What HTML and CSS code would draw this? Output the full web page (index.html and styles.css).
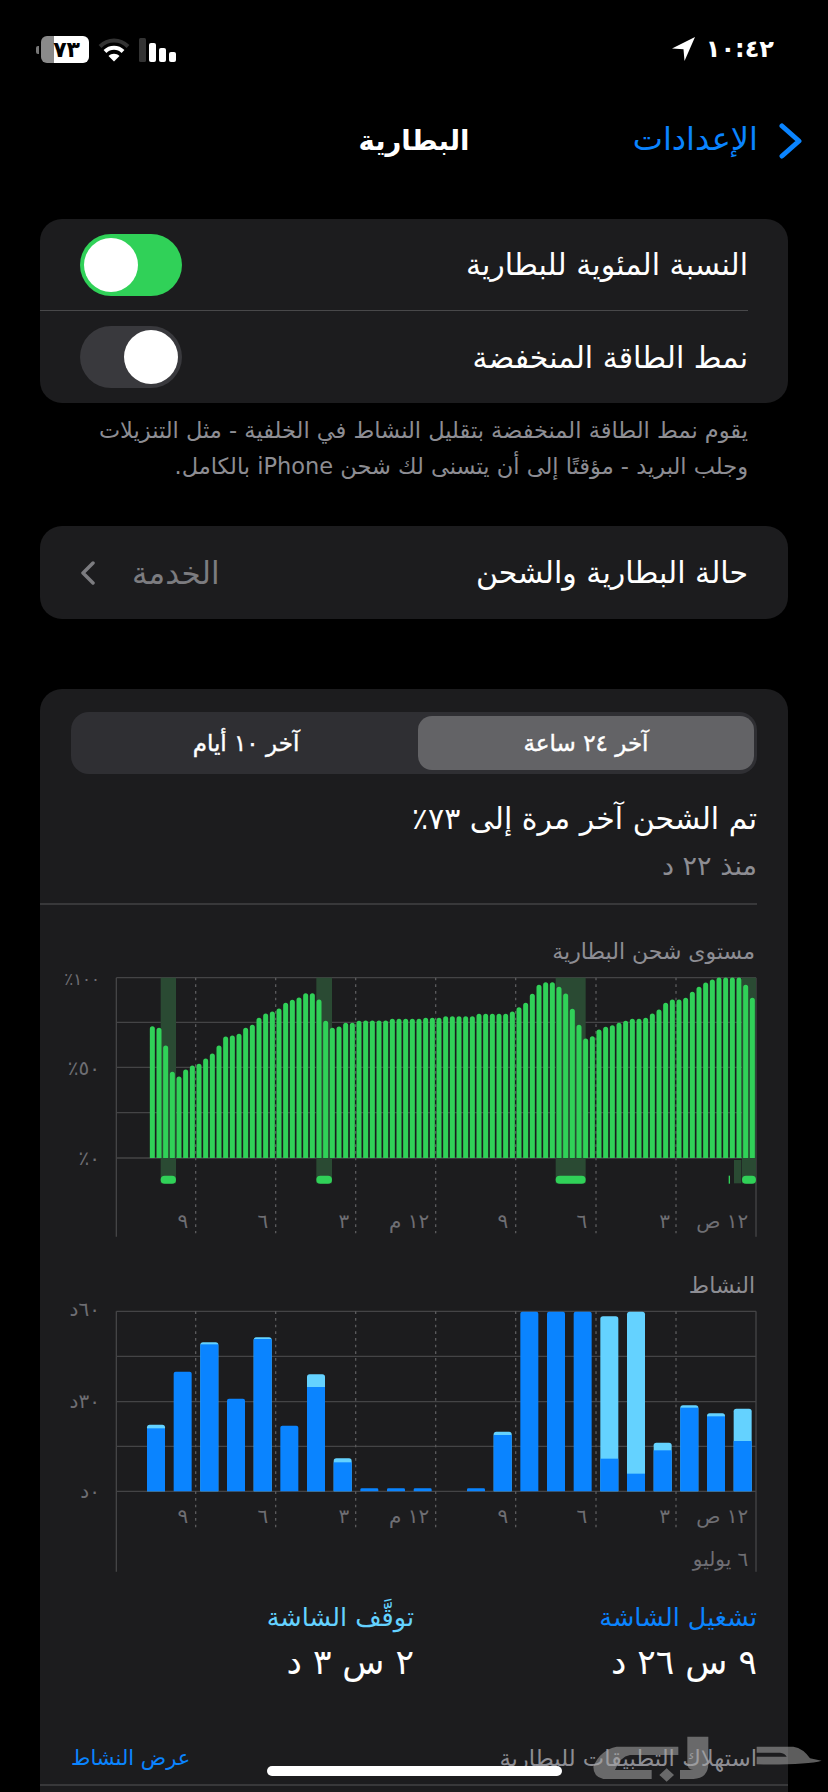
FILE: index.html
```html
<!DOCTYPE html>
<html lang="ar" dir="rtl">
<head>
    <meta charset="UTF-8">
    <meta name="viewport" content="width=device-width, initial-scale=1.0">
    <title>البطارية</title>
    <link rel="stylesheet" href="styles.css">
</head>
<body>
<div class="page">
    <div class="status-bar">
        <div class="status-time">
            <span>١٠:٤٢</span>
            <svg class="status-arrow" viewBox="0 0 25 26"><path d="M24 1 1 12.500l11.500.8L13.500 25z"/></svg>
        </div>
        <div class="status-icons">
            <svg class="signal" viewBox="0 0 37 24">
                <rect class="signal-off" x="0" y="0" width="7" height="24" rx="1.500"/>
                <rect x="10" y="5" width="7" height="19" rx="2"/>
                <rect x="20" y="10" width="7" height="14" rx="2"/>
                <rect x="30" y="14" width="7" height="10" rx="2"/>
            </svg>
            <svg class="wifi" viewBox="0 0 32 24">
                <path class="wifi-off" d="M2 8.500C10 0.500 22 0.500 30 8.500"/>
                <path d="M7 13.500C12 8.500 20 8.500 25 13.500"/>
                <path d="M16 23.500 10.500 18C13.500 15 18.500 15 21.500 18z" class="wifi-dot"/>
            </svg>
            <div class="battery">
                <span class="battery-body">٧٣</span>
                <span class="battery-cap"></span>
            </div>
        </div>
    </div>

    <div class="nav">
        <div class="nav-back">
            <svg class="nav-chevron" viewBox="0 0 23 36"><path d="M3 3 20 18 3 33"/></svg>
            <span>الإعدادات</span>
        </div>
        <div class="nav-title">البطارية</div>
    </div>

    <section class="card">
        <div class="row row-line">
            <span class="row-label">النسبة المئوية للبطارية</span>
            <span class="toggle toggle-on"><i></i></span>
        </div>
        <div class="row">
            <span class="row-label">نمط الطاقة المنخفضة</span>
            <span class="toggle"><i></i></span>
        </div>
    </section>
    <p class="footnote">يقوم نمط الطاقة المنخفضة بتقليل النشاط في الخلفية - مثل التنزيلات<br>وجلب البريد - مؤقتًا إلى أن يتسنى لك شحن iPhone بالكامل.</p>

    <section class="card card-link">
        <span class="row-label">حالة البطارية والشحن</span>
        <div class="link-value">
            <span>الخدمة</span>
            <svg class="link-chevron" viewBox="0 0 16 24"><path d="M13 2 3 12l10 10"/></svg>
        </div>
    </section>

    <section class="card card-usage">
        <div class="segments">
            <div class="segment segment-active">آخر ٢٤ ساعة</div>
            <div class="segment">آخر ١٠ أيام</div>
        </div>

        <div class="charge-info">
            <h2>تم الشحن آخر مرة إلى ٧٣٪</h2>
            <p>منذ ٢٢ د</p>
        </div>

        <div class="chart-title chart-title-first">مستوى شحن البطارية</div>
        <svg class="chart" viewBox="0 120 2244 840">
            <defs>
                <clipPath id="levelClip"><rect x="0" y="120" width="2244" height="564"/></clipPath>
            </defs>
            <path class="grid" d="M229 143H2148M229 277H2148M229 412H2148M229 548H2148M229 684H2148"/>
            <path class="axis" d="M229 143V920M2148 143V920"/>
            <path class="dots" d="M467 143V910M707 143V910M947 143V910M1187 143V910M1427 143V910M1668 143V910M1908 143V910"/>
            <g class="charging">
                <rect x="362" y="143" width="46" height="617"/>
                <rect x="829" y="143" width="47" height="617"/>
                <rect x="1547" y="143" width="90" height="617"/>
                <rect x="2106" y="143" width="42" height="617"/>
                <rect x="2082" y="690" width="22" height="70"/>
            </g>
            <g clip-path="url(#levelClip)">
                <path class="level" transform="translate(0 6)" d="M337 684V290M357 684V295M377 684V348M397 684V427M417 684V441M437 684V420M457 684V408M477 684V403M497 684V387M517 684V372M537 684V348M557 684V321M577 684V318M597 684V313M617 684V295M637 684V286M657 684V265M677 684V252M697 684V246M717 684V237M737 684V220M757 684V211M777 684V204M797 684V191M817 684V191M837 684V210M857 684V274M877 684V295M897 684V291M917 684V280M937 684V280M957 684V274M977 684V273M997 684V273M1017 684V273M1037 684V273M1057 684V268M1077 684V268M1097 684V268M1117 684V268M1137 684V268M1157 684V265M1177 684V265M1197 684V265M1217 684V260M1237 684V260M1257 684V260M1277 684V260M1297 684V260M1317 684V253M1337 684V253M1357 684V253M1377 684V253M1397 684V253M1417 684V246M1437 684V233M1457 684V220M1477 684V193M1497 684V166M1517 684V158M1537 684V158M1557 684V172M1577 684V192M1597 684V238M1617 684V286M1637 684V327M1657 684V320M1677 684V300M1697 684V292M1717 684V287M1737 684V280M1757 684V274M1777 684V268M1797 684V268M1817 684V265M1837 684V252M1857 684V240M1877 684V220M1897 684V210M1917 684V210M1937 684V205M1957 684V187M1977 684V172M1997 684V159M2017 684V150M2037 684V144M2057 684V144M2077 684V144M2097 684V144M2117 684V166M2137 684V205"/>
            </g>
            <g class="pills">
                <rect x="362" y="737" width="46" height="24" rx="12"/>
                <rect x="829" y="737" width="47" height="24" rx="12"/>
                <rect x="1547" y="737" width="90" height="24" rx="12"/>
                <rect x="2106" y="737" width="42" height="24" rx="12"/>
                <rect x="2066" y="737" width="4" height="24"/>
            </g>
            <g class="axis-label">
                <text class="label-tight" x="180" y="164">١٠٠٪</text>
                <text x="180" y="434">٥٠٪</text>
                <text x="180" y="704">٠٪</text>
                <text x="445" y="895">٩</text>
                <text x="685" y="895">٦</text>
                <text x="928" y="895">٣</text>
                <text x="1168" y="895">١٢ م</text>
                <text x="1405" y="895">٩</text>
                <text x="1642" y="895">٦</text>
                <text x="1890" y="895">٣</text>
                <text x="2125" y="895">١٢ ص</text>
            </g>
        </svg>

        <div class="chart-title">النشاط</div>
        <svg class="chart" viewBox="0 126 2244 840">
            <defs>
                <clipPath id="activityClip"><rect x="0" y="126" width="2244" height="565"/></clipPath>
            </defs>
            <path class="grid" d="M229 151H2148M229 286H2148M229 422H2148M229 556H2148M229 691H2148"/>
            <path class="axis" d="M229 151V932M2148 151V932"/>
            <path class="dots" d="M467 151V800M707 151V800M947 151V800M1187 151V800M1427 151V800M1668 151V800M1908 151V800"/>
            <g clip-path="url(#activityClip)">
                <g class="bar-off">
                    <rect x="321" y="491" width="54" height="220" rx="8"/>
                    <rect x="481" y="244" width="54" height="467" rx="8"/>
                    <rect x="641" y="229" width="54" height="482" rx="8"/>
                    <rect x="801" y="340" width="54" height="371" rx="8"/>
                    <rect x="881" y="592" width="54" height="119" rx="8"/>
                    <rect x="1361" y="512" width="54" height="199" rx="8"/>
                    <rect x="1681" y="166" width="54" height="545" rx="8"/>
                    <rect x="1761" y="152" width="54" height="559" rx="8"/>
                    <rect x="1841" y="545" width="54" height="166" rx="8"/>
                    <rect x="1921" y="433" width="54" height="278" rx="8"/>
                    <rect x="2001" y="457" width="54" height="254" rx="8"/>
                    <rect x="2081" y="443" width="54" height="268" rx="8"/>
                </g>
                <g class="bar-on">
                    <rect x="321" y="502" width="54" height="209"/>
                    <rect x="401" y="332" width="54" height="379" rx="6"/>
                    <rect x="481" y="250" width="54" height="461"/>
                    <rect x="561" y="413" width="54" height="298" rx="6"/>
                    <rect x="641" y="234" width="54" height="477"/>
                    <rect x="721" y="494" width="54" height="217" rx="6"/>
                    <rect x="801" y="378" width="54" height="333"/>
                    <rect x="881" y="604" width="54" height="107"/>
                    <rect x="961" y="682" width="54" height="29" rx="4"/>
                    <rect x="1041" y="682" width="54" height="29" rx="4"/>
                    <rect x="1121" y="682" width="54" height="29" rx="4"/>
                    <rect x="1281" y="682" width="54" height="29" rx="4"/>
                    <rect x="1361" y="522" width="54" height="189"/>
                    <rect x="1441" y="152" width="54" height="559" rx="6"/>
                    <rect x="1521" y="152" width="54" height="559" rx="6"/>
                    <rect x="1601" y="152" width="54" height="559" rx="6"/>
                    <rect x="1681" y="593" width="54" height="118"/>
                    <rect x="1761" y="638" width="54" height="73"/>
                    <rect x="1841" y="568" width="54" height="143"/>
                    <rect x="1921" y="440" width="54" height="271"/>
                    <rect x="2001" y="466" width="54" height="245"/>
                    <rect x="2081" y="540" width="54" height="171"/>
                </g>
            </g>
            <g class="axis-label">
                <text x="180" y="164">٦٠د</text>
                <text x="180" y="442">٣٠د</text>
                <text x="180" y="712">٠د</text>
                <text x="445" y="785">٩</text>
                <text x="685" y="785">٦</text>
                <text x="928" y="785">٣</text>
                <text x="1168" y="785">١٢ م</text>
                <text x="1405" y="785">٩</text>
                <text x="1642" y="785">٦</text>
                <text x="1890" y="785">٣</text>
                <text x="2125" y="785">١٢ ص</text>
                <text x="2125" y="915">٦ يوليو</text>
            </g>
        </svg>

        <div class="stats">
            <div class="stat">
                <div class="stat-label stat-on">تشغيل الشاشة</div>
                <div class="stat-value">٩ س ٢٦ د</div>
            </div>
            <div class="stat">
                <div class="stat-label stat-off">توقَّف الشاشة</div>
                <div class="stat-value">٢ س ٣ د</div>
            </div>
        </div>

        <div class="apps-head">
            <span class="apps-title">استهلاك التطبيقات للبطارية</span>
            <span class="apps-link">عرض النشاط</span>
        </div>
    </section>

    <svg class="watermark" viewBox="0 0 744 216">
        <path d="M530 80H640Q670 85 690 115L725 122Q680 135 530 133V110H620Q615 100 600 98H530Z"/>
        <path d="M322 50H385V130Q385 175 340 177H300V150H340Q322 150 322 130Z"/>
        <path d="M40 140Q60 90 110 80H295V105H150Q120 110 105 150H215V177H70Q40 170 40 140Z"/>
        <path d="M260 145 282 165 260 185 238 165Z"/>
    </svg>
    <div class="home-indicator"></div>
</div>
</body>
</html>
```

FILE: styles.css
```css
* {
    box-sizing: border-box;
}
html, body {
    margin: 0;
    background: #000;
}
body {
    font-family: "DejaVu Sans", sans-serif;
    color: #fff;
}
.page {
    position: relative;
    width: 828px;
    height: 1792px;
    overflow: hidden;
}

/* status bar */
.status-bar {
    height: 100px;
    padding: 36px 54px 0 36px;
    display: flex;
    justify-content: space-between;
    align-items: flex-start;
}
.status-time {
    display: flex;
    align-items: center;
    gap: 10px;
    height: 26px;
    font-size: 24px;
    font-weight: bold;
    letter-spacing: -2.500px;
}
.status-arrow {
    width: 25px;
    height: 26px;
    fill: #fff;
}
.status-icons {
    display: flex;
    align-items: center;
    gap: 9px;
    height: 27px;
}
.signal {
    width: 37px;
    height: 24px;
    fill: #fff;
}
.signal-off {
    fill: #333;
}
.wifi {
    width: 32px;
    height: 24px;
    fill: none;
    stroke: #fff;
    stroke-width: 4;
}
.wifi-off {
    stroke: #333;
}
.wifi-dot {
    fill: #fff;
    stroke: none;
}
.battery {
    display: flex;
    align-items: center;
    gap: 2px;
}
.battery-body {
    width: 48px;
    height: 27px;
    border-radius: 6px;
    background: linear-gradient(to left, #fff 35px, #8a8a8a 35px);
    color: #000;
    font-size: 22px;
    font-weight: bold;
    line-height: 27px;
    padding-right: 9px;
}
.battery-cap {
    width: 3px;
    height: 8px;
    border-radius: 2px 0 0 2px;
    background: #777;
}

/* nav */
.nav {
    position: relative;
    height: 84px;
    display: flex;
    align-items: center;
    justify-content: center;
}
.nav-back {
    position: absolute;
    right: 26px;
    top: 20px;
    display: flex;
    align-items: center;
    gap: 21px;
    font-size: 32px;
    color: #0a84ff;
}
.nav-back span {
    margin-bottom: 4px;
}
.nav-chevron {
    width: 23px;
    height: 36px;
    fill: none;
    stroke: #0a84ff;
    stroke-width: 5;
    stroke-linecap: round;
    stroke-linejoin: round;
}
.nav-title {
    padding-bottom: 5px;
    font-size: 27.500px;
    font-weight: bold;
}

/* cards */
.card {
    margin: 35px 40px 0;
    background: #1c1c1e;
    border-radius: 22px;
}
.row {
    height: 92px;
    margin-right: 40px;
    padding-left: 40px;
    display: flex;
    align-items: center;
    justify-content: space-between;
}
.row-line {
    border-bottom: 1px solid #48484a;
}
.row-label {
    font-size: 30px;
}
.toggle {
    width: 102px;
    height: 62px;
    padding: 4px;
    border-radius: 31px;
    background: #39393d;
    display: flex;
    justify-content: flex-start;
}
.toggle i {
    width: 54px;
    height: 54px;
    border-radius: 50%;
    background: #fff;
}
.toggle-on {
    background: #30d158;
    justify-content: flex-end;
}
.footnote {
    margin: 9px 80px 0 0;
    font-size: 22.500px;
    line-height: 36px;
    color: #8d8d93;
}
.card-link {
    height: 93px;
    margin-top: 42px;
    padding: 0 40px;
    display: flex;
    align-items: center;
    justify-content: space-between;
}
.link-value {
    display: flex;
    align-items: center;
    gap: 36px;
    font-size: 31px;
    color: #7c7c80;
}
.link-chevron {
    width: 16px;
    height: 24px;
    fill: none;
    stroke: #7c7c80;
    stroke-width: 3.500;
    stroke-linecap: round;
    stroke-linejoin: round;
}

/* usage card */
.card-usage {
    margin-top: 70px;
    margin-bottom: 0;
    padding-top: 23px;
    height: 1200px;
}
.segments {
    margin: 0 31px;
    height: 62px;
    padding: 4px 3px;
    border-radius: 18px;
    background: #2f2f33;
    display: flex;
}
.segment {
    flex: 1;
    border-radius: 14px;
    display: flex;
    align-items: center;
    justify-content: center;
    font-size: 23px;
    -webkit-text-stroke: 0.4px #fff;
}
.segment-active {
    flex: 0 0 336px;
    background: #636366;
}
.charge-info {
    margin-right: 31px;
    padding-top: 25px;
    height: 131px;
    border-bottom: 2px solid #38383a;
}
.charge-info h2 {
    margin: 0;
    font-size: 30px;
    font-weight: normal;
    line-height: 40px;
}
.charge-info p {
    margin: 11px 0 0;
    font-size: 27px;
    line-height: 32px;
    color: #8d8d93;
}
.chart-title {
    margin: 19px 33px 0;
    height: 34px;
    font-size: 22px;
    line-height: 34px;
    color: #8d8d93;
}
.chart-title-first {
    margin-top: 30px;
    height: 35px;
}
.chart {
    display: block;
    width: 748px;
    height: 280px;
    overflow: visible;
}
.grid {
    stroke: #444446;
    stroke-width: 4;
    fill: none;
}
.axis {
    stroke: #444446;
    stroke-width: 4;
    fill: none;
}
.dots {
    stroke: #5a5a5c;
    stroke-width: 4;
    stroke-dasharray: 8 12;
    fill: none;
}
.charging {
    fill: #2a4a33;
}
.level {
    stroke: #30d158;
    stroke-width: 15;
    stroke-linecap: round;
    fill: none;
}
.pills {
    fill: #30d158;
}
.bar-on {
    fill: #0a84ff;
}
.bar-off {
    fill: #64d2ff;
}
.axis-label {
    font-size: 60px;
    fill: #6e6e73;
}
.label-tight {
    font-size: 50px;
    letter-spacing: -4px;
}
.stats {
    margin: 0 31px;
    padding-top: 16px;
    display: flex;
}
.stat {
    width: 343px;
}
.stat-label {
    font-size: 25.500px;
    line-height: 36px;
}
.stat-on {
    color: #0a84ff;
}
.stat-off {
    color: #64d2ff;
}
.stat-value {
    margin-top: 2px;
    font-size: 34.500px;
    line-height: 50px;
}
.apps-head {
    margin-top: 53px;
    padding: 0 31px;
    height: 46px;
    border-bottom: 2px solid #38383a;
    display: flex;
    justify-content: space-between;
    font-size: 22.700px;
    line-height: 36px;
}
.apps-title {
    color: #8d8d93;
}
.apps-link {
    font-size: 21px;
    color: #0a84ff;
}

/* overlays */
.watermark {
    position: absolute;
    left: 580px;
    top: 1720px;
    width: 248px;
    height: 72px;
    fill: rgba(170, 170, 170, 0.55);
}
.home-indicator {
    position: absolute;
    left: 267px;
    top: 1766px;
    width: 295px;
    height: 10px;
    border-radius: 5px;
    background: #fff;
}
```
